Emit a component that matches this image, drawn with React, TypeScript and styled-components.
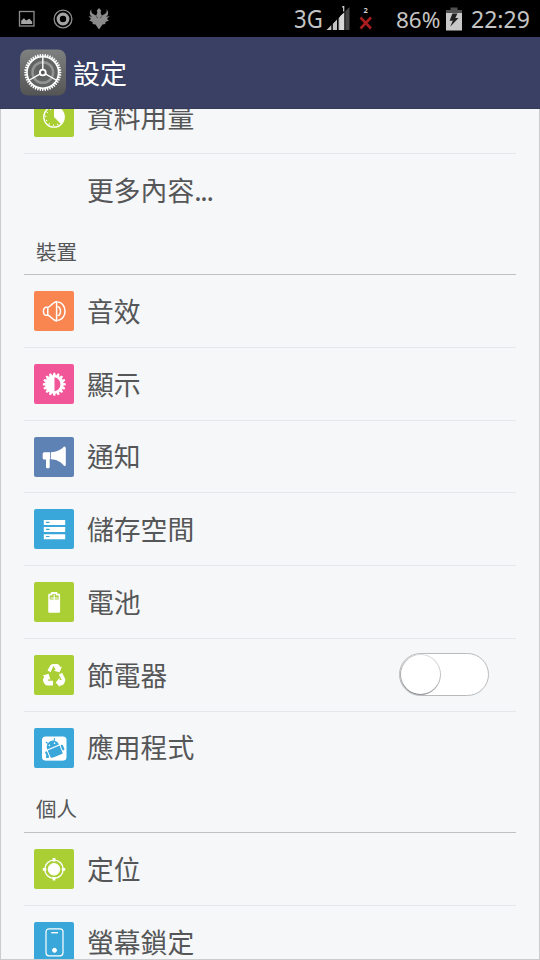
import React from "react";
import styled, { createGlobalStyle } from "styled-components";

const GlobalStyle = createGlobalStyle`
  * { box-sizing: border-box; }
  html, body { margin: 0; padding: 0; background: #000; }
  body { overflow: hidden; }
`;

const Screen = styled.div`
  width: 540px;
  height: 960px;
  display: flex;
  flex-direction: column;
  overflow: hidden;
  background: #f5f7f9;
  font-family: "Noto Sans CJK TC", "Noto Sans", sans-serif;
`;

const StatusBar = styled.div`
  flex: none;
  height: 37px;
  padding: 0 9px 0 18px;
  display: flex;
  justify-content: space-between;
  align-items: center;
  background: #000;
  color: #c4c4c4;
  font-family: "Noto Sans", sans-serif;
`;

const StatusGroup = styled.div`
  display: flex;
  align-items: center;
  height: 37px;
`;

const StatusText = styled.span<{ $size: number; $width: number }>`
  width: ${(p) => p.$width}px;
  font-size: ${(p) => p.$size}px;
  line-height: 37px;
  padding-top: 1px;
  white-space: nowrap;
`;

const Network = styled.span`
  width: 32px;
  font-size: 26px;
  line-height: 36px;
  padding-bottom: 2px;
  white-space: nowrap;
  transform: scaleX(0.85);
  transform-origin: left center;
`;

const StatusSvg = styled.svg<{ $gap?: number }>`
  flex: none;
  display: block;
  margin-right: ${(p) => p.$gap ?? 0}px;
`;

const TitleBar = styled.header`
  flex: none;
  height: 72px;
  padding-left: 20px;
  display: flex;
  align-items: center;
  gap: 6px;
  background: #394063;
  border-bottom: 1px solid #343a58;
`;

const Title = styled.h1`
  margin: 0;
  font-size: 27px;
  font-weight: 400;
  line-height: 40px;
  color: #fff;
`;

const Content = styled.main`
  flex: 1;
  min-height: 0;
  overflow: hidden;
  padding: 0 23px;
  border: solid #cbccce;
  border-width: 0 1px 1px;
`;

const List = styled.div`
  margin-top: -28px;
`;

const Row = styled.div<{ $last?: boolean }>`
  height: 72.75px;
  padding: 0 27px 0 10px;
  display: flex;
  align-items: center;
  border-bottom: 1px solid ${(p) => (p.$last ? "transparent" : "#e5e7ea")};
`;

const Tile = styled.div<{ $color: string }>`
  flex: none;
  width: 40px;
  height: 40px;
  margin-right: 13px;
  border-radius: 2px;
  background: ${(p) => p.$color};
`;

const Label = styled.span`
  flex: 1;
  padding-bottom: 0.2px;
  font-size: 26.8px;
  line-height: 40px;
  color: #555657;
  white-space: nowrap;
`;

const Ellipsis = styled.span`
  letter-spacing: -1.3px;
`;

const SectionTitle = styled.h2`
  margin: 0;
  height: 48.7px;
  padding: 3px 0 0 12px;
  font-size: 20.5px;
  font-weight: 400;
  line-height: 42px;
  color: #555657;
  border-bottom: 1px solid #bfc1c3;
`;

const Track = styled.div`
  width: 90px;
  height: 43px;
  border: 1px solid #b9babc;
  border-radius: 22px;
  background: #fff;
`;

const Knob = styled.div`
  width: 41px;
  height: 41px;
  padding: 1px;
  border-radius: 50%;
  background: linear-gradient(20deg, #85868a 0%, #a9aaad 35%, #e6e6e8 100%);

  &::before {
    content: "";
    display: block;
    width: 39px;
    height: 39px;
    border-radius: 50%;
    background: #fff;
  }
`;

const polar = (cx: number, cy: number, r: number, deg: number) => {
  const a = (deg * Math.PI) / 180;
  return `${(cx + r * Math.sin(a)).toFixed(2)} ${(cy - r * Math.cos(a)).toFixed(2)}`;
};

const cogPath = (c: number, outer: number, inner: number, teeth: number) => {
  const step = 360 / teeth;
  const pts: string[] = [];
  for (let i = 0; i < teeth; i++) {
    const a = i * step;
    pts.push(polar(c, c, inner, a - step * 0.42), polar(c, c, outer, a - step * 0.2));
    pts.push(polar(c, c, outer, a + step * 0.2), polar(c, c, inner, a + step * 0.42));
  }
  return `M${pts.join("L")}Z`;
};

const GearLogo = () => (
  <svg width="47" height="47" viewBox="0 0 47 47">
    <defs>
      <linearGradient id="metal" x1="0" y1="0" x2="0" y2="1">
        <stop offset="0" stopColor="#7f8180" />
        <stop offset="1" stopColor="#535453" />
      </linearGradient>
    </defs>
    <rect y=".5" width="46" height="46" rx="8" fill="url(#metal)" />
    <g transform="translate(-.7 0)">
      <circle cx="23.5" cy="23.5" r="16" fill="#616463" />
      <path
        d={`${cogPath(23.5, 18.6, 16.3, 44)}M38.5 23.5A15 15 0 1 0 8.5 23.5A15 15 0 1 0 38.5 23.5Z`}
        fill="#fff"
        fillRule="evenodd"
      />
      <circle cx="23.5" cy="23.5" r="10.3" fill="none" stroke="#929493" strokeWidth="2.5" />
      <circle cx="23.5" cy="23.5" r="6" fill="#5f6160" />
      <path d="M23.5 20V8M20.5 25.2L10.2 31M26.5 25.2L36.8 31" stroke="#fff" strokeWidth="1.4" />
      <circle cx="23.5" cy="23.5" r="2.9" fill="#555" stroke="#fff" strokeWidth="1.9" />
    </g>
  </svg>
);

const icons: Record<string, React.ReactNode> = {
  data: (
    <>
      <circle cx="20" cy="20" r="10.2" fill="none" stroke="#fff" strokeWidth="1.3" />
      <circle cx="20" cy="20" r="8.3" fill="none" stroke="#fff" strokeWidth="1.5" strokeDasharray="1 3.35" />
      <path d="M20 20V9.8A10.2 10.2 0 0 1 27.2 27.2Z" fill="#fff" />
    </>
  ),
  sound: (
    <g fill="none" stroke="#fff" strokeWidth="1.5" strokeLinejoin="round">
      <path d="M13.8 16.3C17 15.7 18.2 11.2 22.6 10.4V30C18.2 29.2 17 24.8 13.8 24.2Z" />
      <path d="M13.8 16.5C10.4 15.6 9.4 18 9.4 20.3S10.4 25 13.8 24M23.5 11C27.3 10.8 31 15 31 20.2S27.3 29.6 23.5 29.4M23.5 15.8C27.5 15.3 27.5 25.1 23.5 24.6" />
    </g>
  ),
  display: (
    <>
      <path d={cogPath(20.3, 11.5, 9.2, 16)} fill="#fff" />
      <path d="M20.5 13.3A7.1 7.1 0 0 1 20.5 27.3Z" fill="#f05698" />
    </>
  ),
  notice: (
    <path
      d="M10.2 15.2H16.2V22.3H15.7V30Q15.7 31.2 14.5 31.2H13.2Q12 31.2 12 30V22.5H10.2Q8.7 22.5 8.7 20.9V16.8Q8.7 15.2 10.2 15.2ZM17 15.3C22.5 15.2 27 13 30.2 9.6Q31.8 9.6 31.8 11.2V27.8Q31.8 29.4 30.2 29C27 25 22.5 22.4 17 22.3Z"
      fill="#fff"
    />
  ),
  storage: (
    <>
      <path d="M9.8 11H31.2V16H9.8ZM9.8 18H31.2V23H9.8ZM9.8 25.2H31.2V30.2H9.8Z" fill="#fff" />
      <path d="M12 13.3H15.5M12 20.3H15.5M12 27.5H15.5" stroke="#39a7da" strokeWidth="1.2" />
    </>
  ),
  battery: (
    <>
      <path d="M14.8 12.2H17.3V10.5H23V12.2H25.6V30.2H14.8Z" fill="#fff" stroke="#fff" strokeLinejoin="round" />
      <path d="M15.8 17.6V13.5H18.5V12H21.8V13.5H24.6V17.6Z" fill="#a7cc35" />
      <path d="M20.2 12.5V18M16.5 16H24" stroke="#fff" strokeWidth="1.1" />
    </>
  ),
  recycle: (
    <g fill="#fff">
      <path d="M13.5 15.5L16.2 10.6Q17.2 9 19 9H23Q24.7 9 25.5 10.6L26.3 12.2L28 11.3L25.6 17.2L19.8 15.8L21.7 14.8L19.4 11L16.6 17.2Z" />
      <path d="M28.1 17.8L31 23.5Q31.8 25 31 26.6L29.8 29Q29 30.4 27.2 30.4H25.7V32L21.7 27.5L25.7 22.8V25H27.8L24.8 19.6Z" />
      <path d="M19 30.4H13.2Q11.5 30.4 10.6 29L9.3 26.6Q8.5 25.1 9.3 23.5L10.3 21.7L8.8 20.6L14.7 18.8L16.4 24.7L14.7 23.9L13.8 25.8H19Z" />
    </g>
  ),
  apps: (
    <>
      <rect x="8" y="8.5" width="24.5" height="24" rx="3.5" fill="#fff" />
      <g transform="rotate(-23 20 21)" fill="#39a7da">
        <path d="M13.6 18.7A6.4 6.4 0 0 1 26.4 18.7ZM13.6 20H26.4V28.6H13.6Z" />
        <path d="M16.5 13.5L15.3 11.3M23.5 13.5L24.7 11.3" stroke="#39a7da" strokeWidth="1.2" />
        <rect x="10.4" y="20" width="2.2" height="6.5" rx="1.1" />
        <rect x="27.4" y="20" width="2.2" height="6" rx="1.1" />
        <circle cx="17.2" cy="15.8" r=".8" fill="#fff" />
        <circle cx="22.8" cy="15.8" r=".8" fill="#fff" />
      </g>
      <path d="M11 31H29.5" stroke="#fff" strokeWidth="2.6" />
      <path d="M12 27.5L15.5 30H12Z" fill="#39a7da" />
    </>
  ),
  location: (
    <g fill="none" stroke="#fff">
      <circle cx="20" cy="20.3" r="9.2" strokeWidth="1.4" />
      <circle cx="20" cy="20.3" r="5.8" fill="#fff" />
      <path d="M20 9V12.5M20 28V31.5M8.8 20.3H12.2M27.8 20.3H31.2" strokeWidth="2.8" />
    </g>
  ),
  lock: (
    <g fill="none" stroke="#fff">
      <rect x="12" y="6.8" width="17" height="27" rx="3" strokeWidth="1.2" />
      <path d="M17.2 10.7H24" strokeWidth="1.4" />
      <circle cx="20.5" cy="28.3" r="2" fill="#fff" />
    </g>
  ),
};

type Item = { id: string; label: string; color?: string; toggle?: boolean; more?: boolean };

const device: Item[] = [
  { id: "sound", label: "音效", color: "#f98550" },
  { id: "display", label: "顯示", color: "#f05698" },
  { id: "notice", label: "通知", color: "#5f82b4" },
  { id: "storage", label: "儲存空間", color: "#39a7da" },
  { id: "battery", label: "電池", color: "#a9cf35" },
  { id: "recycle", label: "節電器", color: "#a9cf35", toggle: true },
  { id: "apps", label: "應用程式", color: "#39a7da" },
];

const network: Item[] = [
  { id: "data", label: "資料用量", color: "#a9cf35" },
  { id: "more", label: "更多內容", more: true },
];

const personal: Item[] = [
  { id: "location", label: "定位", color: "#a9cf35" },
  { id: "lock", label: "螢幕鎖定", color: "#39a7da" },
];

const SettingRows = ({ items }: { items: Item[] }) => (
  <>
    {items.map((item, i) => (
      <Row key={item.id} $last={i === items.length - 1}>
        <Tile $color={item.color ?? "transparent"}>
          {item.color && (
            <svg width="40" height="40" viewBox="0 0 40 40">
              {icons[item.id]}
            </svg>
          )}
        </Tile>
        <Label>
          {item.label}
          {item.more && <Ellipsis>...</Ellipsis>}
        </Label>
        {item.toggle && (
          <Track>
            <Knob />
          </Track>
        )}
      </Row>
    ))}
  </>
);

export default function App() {
  return (
    <>
      <GlobalStyle />
      <Screen>
        <StatusBar>
          <StatusGroup>
            <StatusSvg $gap={18} width="17" height="17" viewBox="0 0 17 17">
              <rect x="1.5" y="1.5" width="14.5" height="14.5" fill="none" stroke="#8e8e8e" strokeWidth="1.3" />
              <path d="M3.2 14V10.8L6 8.2L8 10.5L10 9.5L11.5 8.7L14.2 11.8V14Z" fill="#a5a5a5" />
            </StatusSvg>
            <StatusSvg $gap={15} width="20" height="20" viewBox="0 0 20 20">
              <circle cx="10" cy="10" r="8.9" fill="none" stroke="#8e8e8e" strokeWidth="1.3" />
              <circle cx="10" cy="10" r="4.8" fill="none" stroke="#a5a5a5" strokeWidth="3.2" />
            </StatusSvg>
            <StatusSvg width="22" height="22" viewBox="0 0 22 22">
              <path
                d="M3.5 1C2.5 4 4.3 6.3 8.3 7.4L9.4 4.5L8.8 2.5L11 0L13.2 2.5L12.6 4.5L13.7 7.4C17.7 6.3 19.5 4 18.5 1C21 4 20.5 7.4 17.8 9L21.5 8L19 11L21 12.5L17.5 14L17.3 16L14.5 16.5L11 21.5L7.5 16.5L4.7 16L4.5 14L1 12.5L3 11L.5 8L4.2 9C1.5 7.4 1 4 3.5 1Z"
                fill="#8b8b8b"
              />
              <path d="M8 8.5L10 10M14 8.5L12 10" stroke="#3a3a3a" strokeWidth=".8" />
            </StatusSvg>
          </StatusGroup>
          <StatusGroup>
            <Network>3G</Network>
            <StatusSvg $gap={8} width="25" height="26" viewBox="0 0 25 26">
              <path d="M.5 24L5.5 19V24ZM6.7 24V17.9L11 13.6V24ZM12.2 24V12.4L16.3 8.3V24Z" fill="#c4c4c4" />
              <path d="M14 24V10.5L18.3 6.3V24Z" fill="#d8d8d8" />
              <path d="M12.1 9V24M6.1 16V24" stroke="#000" strokeWidth=".8" />
              <path d="M19.3 24V5.2L23.5 1V24Z" fill="#464646" />
              <path d="M16.2 1.2L17.7 .2V5.4" stroke="#d0d0d0" strokeWidth="1.2" fill="none" />
            </StatusSvg>
            <StatusSvg $gap={24} width="13" height="28" viewBox="0 0 13 28">
              <text x="4.6" y="8" fontSize="7.5" fontWeight="700" fill="#cfcfcf" fontFamily="Noto Sans">2</text>
              <path d="M1.5 12.5L12 23.5M12 12.5L1.5 23.5" stroke="#a81c20" strokeWidth="2.6" />
            </StatusSvg>
            <StatusText $size={22.5} $width={50}>86%</StatusText>
            <StatusSvg $gap={9} width="16" height="24" viewBox="0 0 16 24">
              <path d="M4.5 .5H11.5V3H16V8H0V3H4.5Z" fill="#515151" />
              <path d="M0 6H16V23.5H0Z" fill="#c8c8c8" />
              <path d="M6.4 6.5H11.5L9.3 11H12.5L4.2 19.8L6.8 13.8H3.6Z" fill="#202020" />
            </StatusSvg>
            <StatusText $size={23} $width={60}>22:29</StatusText>
          </StatusGroup>
        </StatusBar>
        <TitleBar>
          <GearLogo />
          <Title>設定</Title>
        </TitleBar>
        <Content>
          <List>
            <SettingRows items={network} />
            <SectionTitle>裝置</SectionTitle>
            <SettingRows items={device} />
            <SectionTitle>個人</SectionTitle>
            <SettingRows items={personal} />
          </List>
        </Content>
      </Screen>
    </>
  );
}
